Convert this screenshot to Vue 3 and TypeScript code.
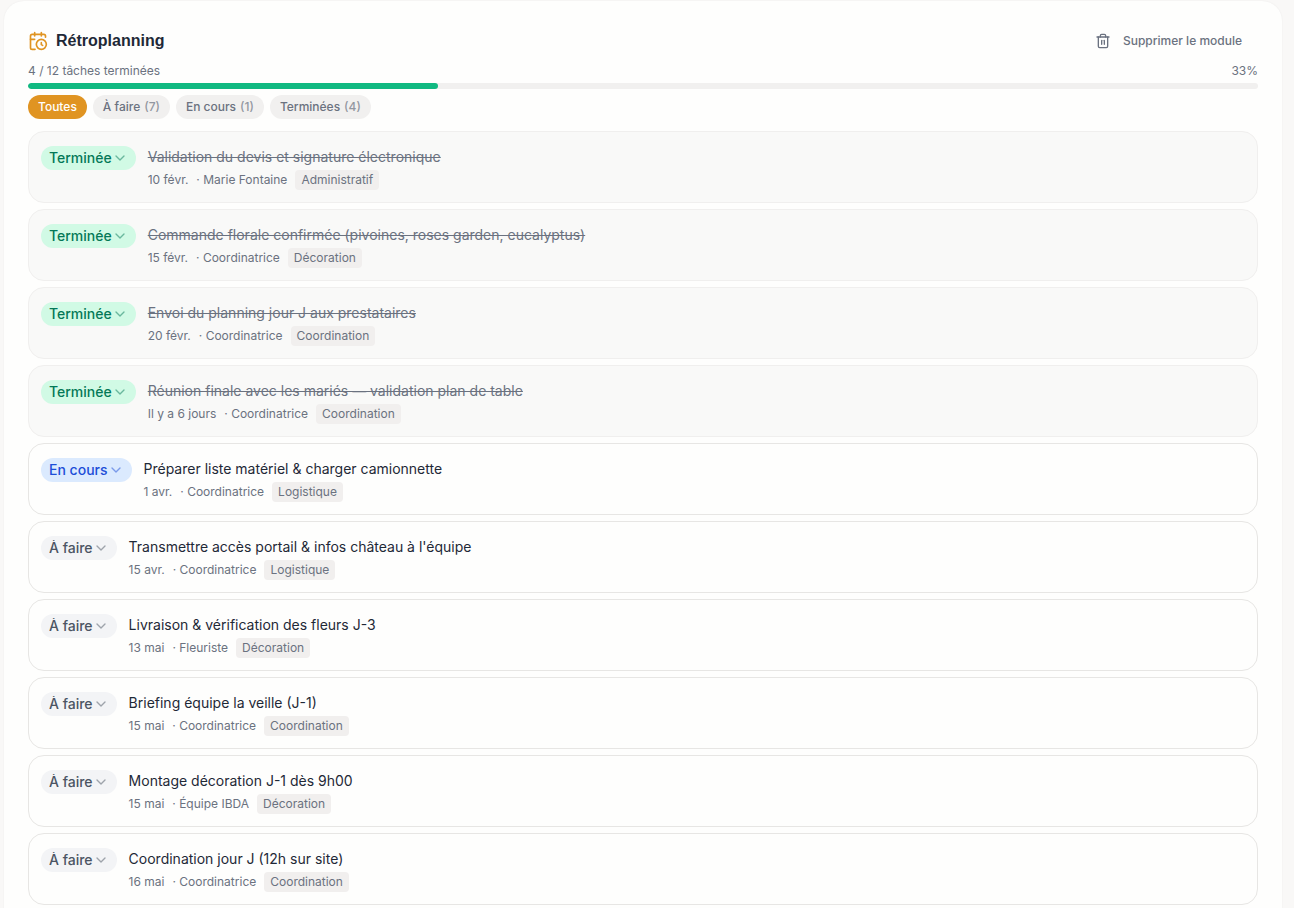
<script setup lang="ts">
import { computed, ref } from 'vue'

type Status = 'todo' | 'doing' | 'done'
type Filter = 'all' | Status

interface Task {
  id: number
  title: string
  date: string
  owner: string
  tag: string
  status: Status
}

const statusLabels: Record<Status, string> = {
  todo: 'À faire',
  doing: 'En cours',
  done: 'Terminée',
}

const filters: { key: Filter; label: string; count?: number }[] = [
  { key: 'all', label: 'Toutes' },
  { key: 'todo', label: 'À faire', count: 7 },
  { key: 'doing', label: 'En cours', count: 1 },
  { key: 'done', label: 'Terminées', count: 4 },
]

const tasks = ref<Task[]>([
  { id: 1, title: 'Validation du devis et signature électronique', date: '10 févr.', owner: 'Marie Fontaine', tag: 'Administratif', status: 'done' },
  { id: 2, title: 'Commande florale confirmée (pivoines, roses garden, eucalyptus)', date: '15 févr.', owner: 'Coordinatrice', tag: 'Décoration', status: 'done' },
  { id: 3, title: 'Envoi du planning jour J aux prestataires', date: '20 févr.', owner: 'Coordinatrice', tag: 'Coordination', status: 'done' },
  { id: 4, title: 'Réunion finale avec les mariés — validation plan de table', date: 'Il y a 6 jours', owner: 'Coordinatrice', tag: 'Coordination', status: 'done' },
  { id: 5, title: 'Préparer liste matériel & charger camionnette', date: '1 avr.', owner: 'Coordinatrice', tag: 'Logistique', status: 'doing' },
  { id: 6, title: "Transmettre accès portail & infos château à l'équipe", date: '15 avr.', owner: 'Coordinatrice', tag: 'Logistique', status: 'todo' },
  { id: 7, title: 'Livraison & vérification des fleurs J-3', date: '13 mai', owner: 'Fleuriste', tag: 'Décoration', status: 'todo' },
  { id: 8, title: 'Briefing équipe la veille (J-1)', date: '15 mai', owner: 'Coordinatrice', tag: 'Coordination', status: 'todo' },
  { id: 9, title: 'Montage décoration J-1 dès 9h00', date: '15 mai', owner: 'Équipe IBDA', tag: 'Décoration', status: 'todo' },
  { id: 10, title: 'Coordination jour J (12h sur site)', date: '16 mai', owner: 'Coordinatrice', tag: 'Coordination', status: 'todo' },
])

const total = 12
const completed = 4
const progress = (completed / total) * 100

const active = ref<Filter>('all')
const visibleTasks = computed(() =>
  active.value === 'all' ? tasks.value : tasks.value.filter((t) => t.status === active.value),
)
</script>

<template>
  <main class="page">
    <section class="module" aria-labelledby="module-title">
      <header class="head">
        <div class="heading">
          <svg class="heading-icon" viewBox="0 0 24 24" aria-hidden="true">
            <path d="M16 14v2.2l1.6 1" />
            <path d="M16 2v4" />
            <path d="M21 7.5V6a2 2 0 0 0-2-2H5a2 2 0 0 0-2 2v14a2 2 0 0 0 2 2h3.5" />
            <path d="M3 10h5" />
            <path d="M8 2v4" />
            <circle cx="16" cy="16" r="6" />
          </svg>
          <h2 id="module-title">Rétroplanning</h2>
        </div>
        <button type="button" class="remove">
          <svg viewBox="0 0 24 24" aria-hidden="true">
            <path d="M10 11v6" />
            <path d="M14 11v6" />
            <path d="M19 6v14a2 2 0 0 1-2 2H7a2 2 0 0 1-2-2V6" />
            <path d="M3 6h18" />
            <path d="M8 6V4a2 2 0 0 1 2-2h4a2 2 0 0 1 2 2v2" />
          </svg>
          Supprimer le module
        </button>
      </header>

      <div class="summary">
        <span>{{ completed }} / {{ total }} tâches terminées</span>
        <span>{{ Math.round(progress) }}%</span>
      </div>
      <div class="track" role="progressbar" aria-label="Tâches terminées" :aria-valuenow="completed" aria-valuemin="0" :aria-valuemax="total">
        <div class="fill" :style="{ width: progress + '%' }"></div>
      </div>

      <div class="filters">
        <button
          v-for="f in filters"
          :key="f.key"
          type="button"
          class="chip"
          :class="{ active: active === f.key }"
          :aria-pressed="active === f.key"
          @click="active = f.key"
        >
          {{ f.label }}<span v-if="f.count" class="count">({{ f.count }})</span>
        </button>
      </div>

      <ul class="tasks">
        <li v-for="task in visibleTasks" :key="task.id" class="task" :class="task.status">
          <div class="status">
            <select v-model="task.status" :aria-label="'Statut : ' + task.title">
              <option v-for="(label, key) in statusLabels" :key="key" :value="key">{{ label }}</option>
            </select>
            <svg class="chevron" viewBox="0 0 24 24" aria-hidden="true"><path d="m6 9 6 6 6-6" /></svg>
          </div>
          <div class="body">
            <p class="title">{{ task.title }}</p>
            <div class="meta">
              <span>{{ task.date }}</span>
              <span>· {{ task.owner }}</span>
              <span class="tag">{{ task.tag }}</span>
            </div>
          </div>
        </li>
      </ul>
    </section>
  </main>
</template>

<style>
body {
  background: #f9f8f7;
}
html {
  scrollbar-width: none;
}
</style>

<style scoped>
.page {
  padding: 1px 12px 0 4px;
  font-family: Inter, "Liberation Sans", sans-serif;
  font-size: 12px;
  line-height: 16px;
  color: #6b7280;
}
.module {
  padding: 24px;
  border-radius: 20px;
  background: #fefefd;
  box-shadow: 0 0 2px rgba(0, 0, 0, 0.06);
}
svg {
  fill: none;
  stroke: currentColor;
  stroke-width: 2;
  stroke-linecap: round;
  stroke-linejoin: round;
  flex: none;
}
button,
select {
  border: 0;
  margin: 0;
  font: inherit;
  color: inherit;
  cursor: pointer;
}
.head,
.heading,
.summary,
.filters,
.meta {
  display: flex;
  align-items: center;
}
.head {
  justify-content: space-between;
}
.heading {
  gap: 8px;
}
.heading-icon {
  width: 20px;
  height: 20px;
  color: #e09422;
}
h2 {
  margin: 0;
  font-family: "Liberation Sans", Arial, sans-serif;
  font-size: 16px;
  line-height: 24px;
  font-weight: 700;
  color: #1f2937;
}
.remove {
  display: flex;
  align-items: center;
  gap: 12px;
  height: 32px;
  padding: 0 16px;
  background: transparent;
  font-weight: 500;
}
.remove svg {
  width: 16px;
  height: 16px;
}
.summary {
  justify-content: space-between;
  margin-top: 6px;
}
.track {
  height: 6px;
  margin-top: 4px;
  border-radius: 3px;
  background: #f1f0ef;
  overflow: hidden;
}
.fill {
  height: 100%;
  border-radius: 3px;
  background: #10b981;
}
.filters {
  flex-wrap: wrap;
  gap: 6px;
  margin-top: 6px;
}
.chip {
  display: flex;
  align-items: center;
  gap: 4px;
  height: 24px;
  padding: 0 10px;
  border-radius: 12px;
  background: #f1f0ef;
  font-weight: 500;
}
.chip.active {
  background: #e09422;
  color: #fff;
}
.count {
  opacity: 0.7;
}
.tasks {
  display: flex;
  flex-direction: column;
  gap: 6px;
  margin: 12px 0 0;
  padding: 0;
  list-style: none;
}
.task {
  display: flex;
  align-items: flex-start;
  gap: 12px;
  padding: 14px 12px 12px;
  border: 1px solid #e7e6e4;
  border-radius: 16px;
}
.task.done {
  background: #f9f9f8;
  border-color: #f0efee;
}
.status {
  position: relative;
  border-radius: 12px;
  background: #f3f4f6;
  color: #4b5563;
}
.status select {
  display: block;
  appearance: none;
  field-sizing: content;
  height: 24px;
  padding: 0 24px 0 8px;
  border-radius: 12px;
  background: transparent;
  font-size: 14px;
  font-weight: 500;
}
.chevron {
  position: absolute;
  top: 4px;
  right: 8px;
  width: 16px;
  height: 16px;
  opacity: 0.5;
  pointer-events: none;
}
.done .status {
  background: #d1fae5;
  color: #047857;
}
.doing .status {
  background: #dbeafe;
  color: #1d4ed8;
}
.body {
  flex: 1;
  min-width: 0;
}
.title {
  margin: 0;
  font-size: 14px;
  line-height: 22px;
  color: #1f2937;
}
.done .title {
  color: #6b7280;
  text-decoration: line-through;
}
.meta {
  flex-wrap: wrap;
  gap: 8px;
  margin-top: 2px;
}
.tag {
  padding: 2px 6px;
  border-radius: 4px;
  background: #f1efee;
}
</style>
